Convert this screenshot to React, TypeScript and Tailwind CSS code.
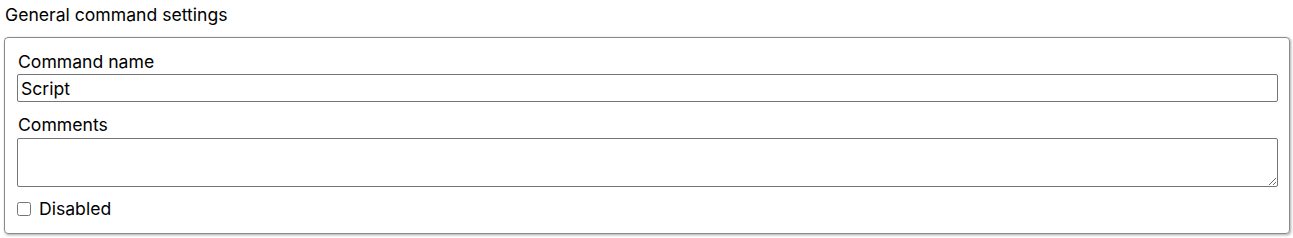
import React from "react";

export default function App() {
  return (
    <div className="bg-white text-black w-[1293px] h-[238px] font-['Inter',sans-serif] text-[17.6px] leading-[24px]">
      <div className="pl-[5px] pt-[3px] h-[37px]">General command settings</div>
      <div className="ml-[4px] mr-[3px] border border-[#8a8a8a] rounded-[4px] shadow-[1px_1px_3px_rgba(0,0,0,0.35)] pl-[12px] pr-[11px] pt-[12px] pb-[12px]">
        <div className="pl-[1px]">Command name</div>
        <input
          type="text"
          defaultValue="Script"
          className="block w-full h-[28px] border border-[#767676] rounded-[2px] px-[3px] text-[17.6px] font-['Inter',sans-serif] outline-none"
        />
        <div className="pl-[1px] mt-[11px]">Comments</div>
        <textarea
          className="block w-full h-[49px] mt-[1px] border border-[#767676] rounded-[2px] px-[3px] text-[17.6px] font-['Inter',sans-serif] outline-none"
        />
        <label className="flex items-center gap-[8px] mt-[10px] h-[24px]">
          <input type="checkbox" className="w-[14px] h-[14px] m-0 appearance-auto" />
          <span>Disabled</span>
        </label>
      </div>
    </div>
  );
}
